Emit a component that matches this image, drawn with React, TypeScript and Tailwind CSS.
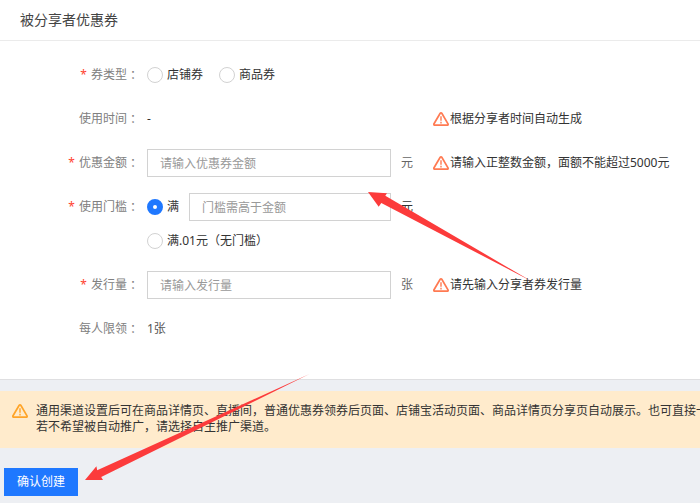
import { useState, type ReactNode } from 'react';

type FormRowProps = {
  label: string;
  htmlFor?: string;
  required?: boolean;
  unit?: string;
  unitClass?: string;
  hint?: string;
  children: ReactNode;
};

function WarningIcon({ className }: { className: string }) {
  return (
    <svg
      className={`h-4 w-4 shrink-0 ${className}`}
      viewBox="0 0 16 16"
      fill="none"
      stroke="currentColor"
      strokeLinejoin="round"
    >
      <path
        strokeWidth={1.7}
        d="M7.2 2.2 1 12.8c-.4.7 0 1.4.8 1.4h12.4c.8 0 1.2-.7.8-1.4L8.8 2.2c-.4-.6-1.2-.6-1.6 0z"
      />
      <path strokeWidth={1.4} d="M8 5.2v4.6M8 10.8v1.6" />
    </svg>
  );
}

function FormRow({
  label,
  htmlFor,
  required,
  unit,
  unitClass = 'text-[#666]',
  hint,
  children,
}: FormRowProps) {
  return (
    <div className="flex items-start">
      <label
        htmlFor={htmlFor}
        className="mr-2 flex h-7 w-[139px] shrink-0 items-center justify-end text-[#808080]"
      >
        {required && <span className="mr-1 text-[#ff4230]">*</span>}
        {label}
        <span className="font-['Noto_Sans_CJK_TC',sans-serif]">：</span>
      </label>
      <div className="w-[244px] shrink-0">{children}</div>
      <span className={`ml-2.5 flex h-7 w-8 shrink-0 items-center ${unitClass}`}>{unit}</span>
      {hint && (
        <p className="flex h-7 items-center gap-px whitespace-nowrap">
          <WarningIcon className="text-[#ff7a52]" />
          {hint}
        </p>
      )}
    </div>
  );
}

const inputClass =
  'h-7 w-full min-w-0 border border-[#d2d2d2] bg-white px-3 text-xs text-[#333] placeholder:text-[#999] focus:border-[#1f78ff] focus:outline-none';

const radioClass =
  'h-4 w-4 shrink-0 appearance-none rounded-full border border-[#d2d2d2] bg-white checked:border-[6px] checked:border-[#1f78ff]';

export default function App() {
  const [couponType, setCouponType] = useState('');
  const [threshold, setThreshold] = useState('limit');

  return (
    <main className="relative min-h-screen overflow-hidden bg-[#edeff3] font-['Noto_Sans','Noto_Sans_CJK_SC',sans-serif] text-xs text-[#333]">
      <section className="border-b border-[#dfdfe1] bg-white">
        <h1 className="flex h-[41px] items-center border-b border-[#ebebeb] px-5 text-sm text-[#444]">
          被分享者优惠券
        </h1>

        <form className="flex flex-col gap-4 pt-5 pb-9">
          <FormRow label="券类型" required>
            <div className="flex h-7 items-center gap-4">
              <label className="flex items-center gap-1">
                <input
                  type="radio"
                  name="type"
                  className={radioClass}
                  checked={couponType === 'shop'}
                  onChange={() => setCouponType('shop')}
                />
                店铺券
              </label>
              <label className="flex items-center gap-1">
                <input
                  type="radio"
                  name="type"
                  className={radioClass}
                  checked={couponType === 'goods'}
                  onChange={() => setCouponType('goods')}
                />
                商品券
              </label>
            </div>
          </FormRow>

          <FormRow label="使用时间" hint="根据分享者时间自动生成">
            <span className="flex h-7 items-center">-</span>
          </FormRow>

          <FormRow
            label="优惠金额"
            htmlFor="amount"
            required
            unit="元"
            hint="请输入正整数金额，面额不能超过5000元"
          >
            <input id="amount" type="text" placeholder="请输入优惠券金额" className={inputClass} />
          </FormRow>

          <FormRow
            label="使用门槛"
            htmlFor="threshold"
            required
            unit="元"
            unitClass="text-[#333]"
          >
            <div className="flex flex-col gap-1.5">
              <div className="flex items-center gap-2.5">
                <label className="flex shrink-0 items-center gap-1">
                  <input
                    type="radio"
                    name="threshold"
                    className={radioClass}
                    checked={threshold === 'limit'}
                    onChange={() => setThreshold('limit')}
                  />
                  满
                </label>
                <input id="threshold" type="text" placeholder="门槛需高于金额" className={inputClass} />
              </div>
              <label className="flex h-7 items-center gap-1">
                <input
                  type="radio"
                  name="threshold"
                  className={radioClass}
                  checked={threshold === 'none'}
                  onChange={() => setThreshold('none')}
                />
                满.01元（无门槛）
              </label>
            </div>
          </FormRow>

          <FormRow label="发行量" htmlFor="count" required unit="张" hint="请先输入分享者券发行量">
            <input id="count" type="text" placeholder="请输入发行量" className={inputClass} />
          </FormRow>

          <FormRow label="每人限领">
            <span className="flex h-7 items-center text-[#555]">1张</span>
          </FormRow>
        </form>
      </section>

      <div className="mt-[11px] flex gap-2 overflow-hidden bg-[#ffebcc] px-3 pt-3 pb-[13px]">
        <WarningIcon className="text-[#ffa427]" />
        <p className="whitespace-nowrap leading-4">
          通用渠道设置后可在商品详情页、直播间，普通优惠券领券后页面、店铺宝活动页面、商品详情页分享页自动展示。也可直接一
          <br />
          若不希望被自动推广，请选择自主推广渠道。
        </p>
      </div>

      <button
        type="button"
        className="mt-5 ml-1 h-7 bg-[#1f78ff] px-[13px] text-xs text-white hover:bg-[#3d8aff]"
      >
        确认创建
      </button>

      {/* guide arrows drawn over the form */}
      <svg
        className="pointer-events-none absolute top-0 left-0 h-[503px] w-[700px]"
        viewBox="0 0 700 503"
        fill="#fc3b3b"
        aria-hidden="true"
      >
        <path d="M368 192 387 193.3 385.3 195.8 532 281.5 381.3 203 378.7 206.8z" />
        <path d="M85 480 96.4 466.3 97.2 470.3 309.5 374 101.2 477 103 480z" />
      </svg>
    </main>
  );
}
